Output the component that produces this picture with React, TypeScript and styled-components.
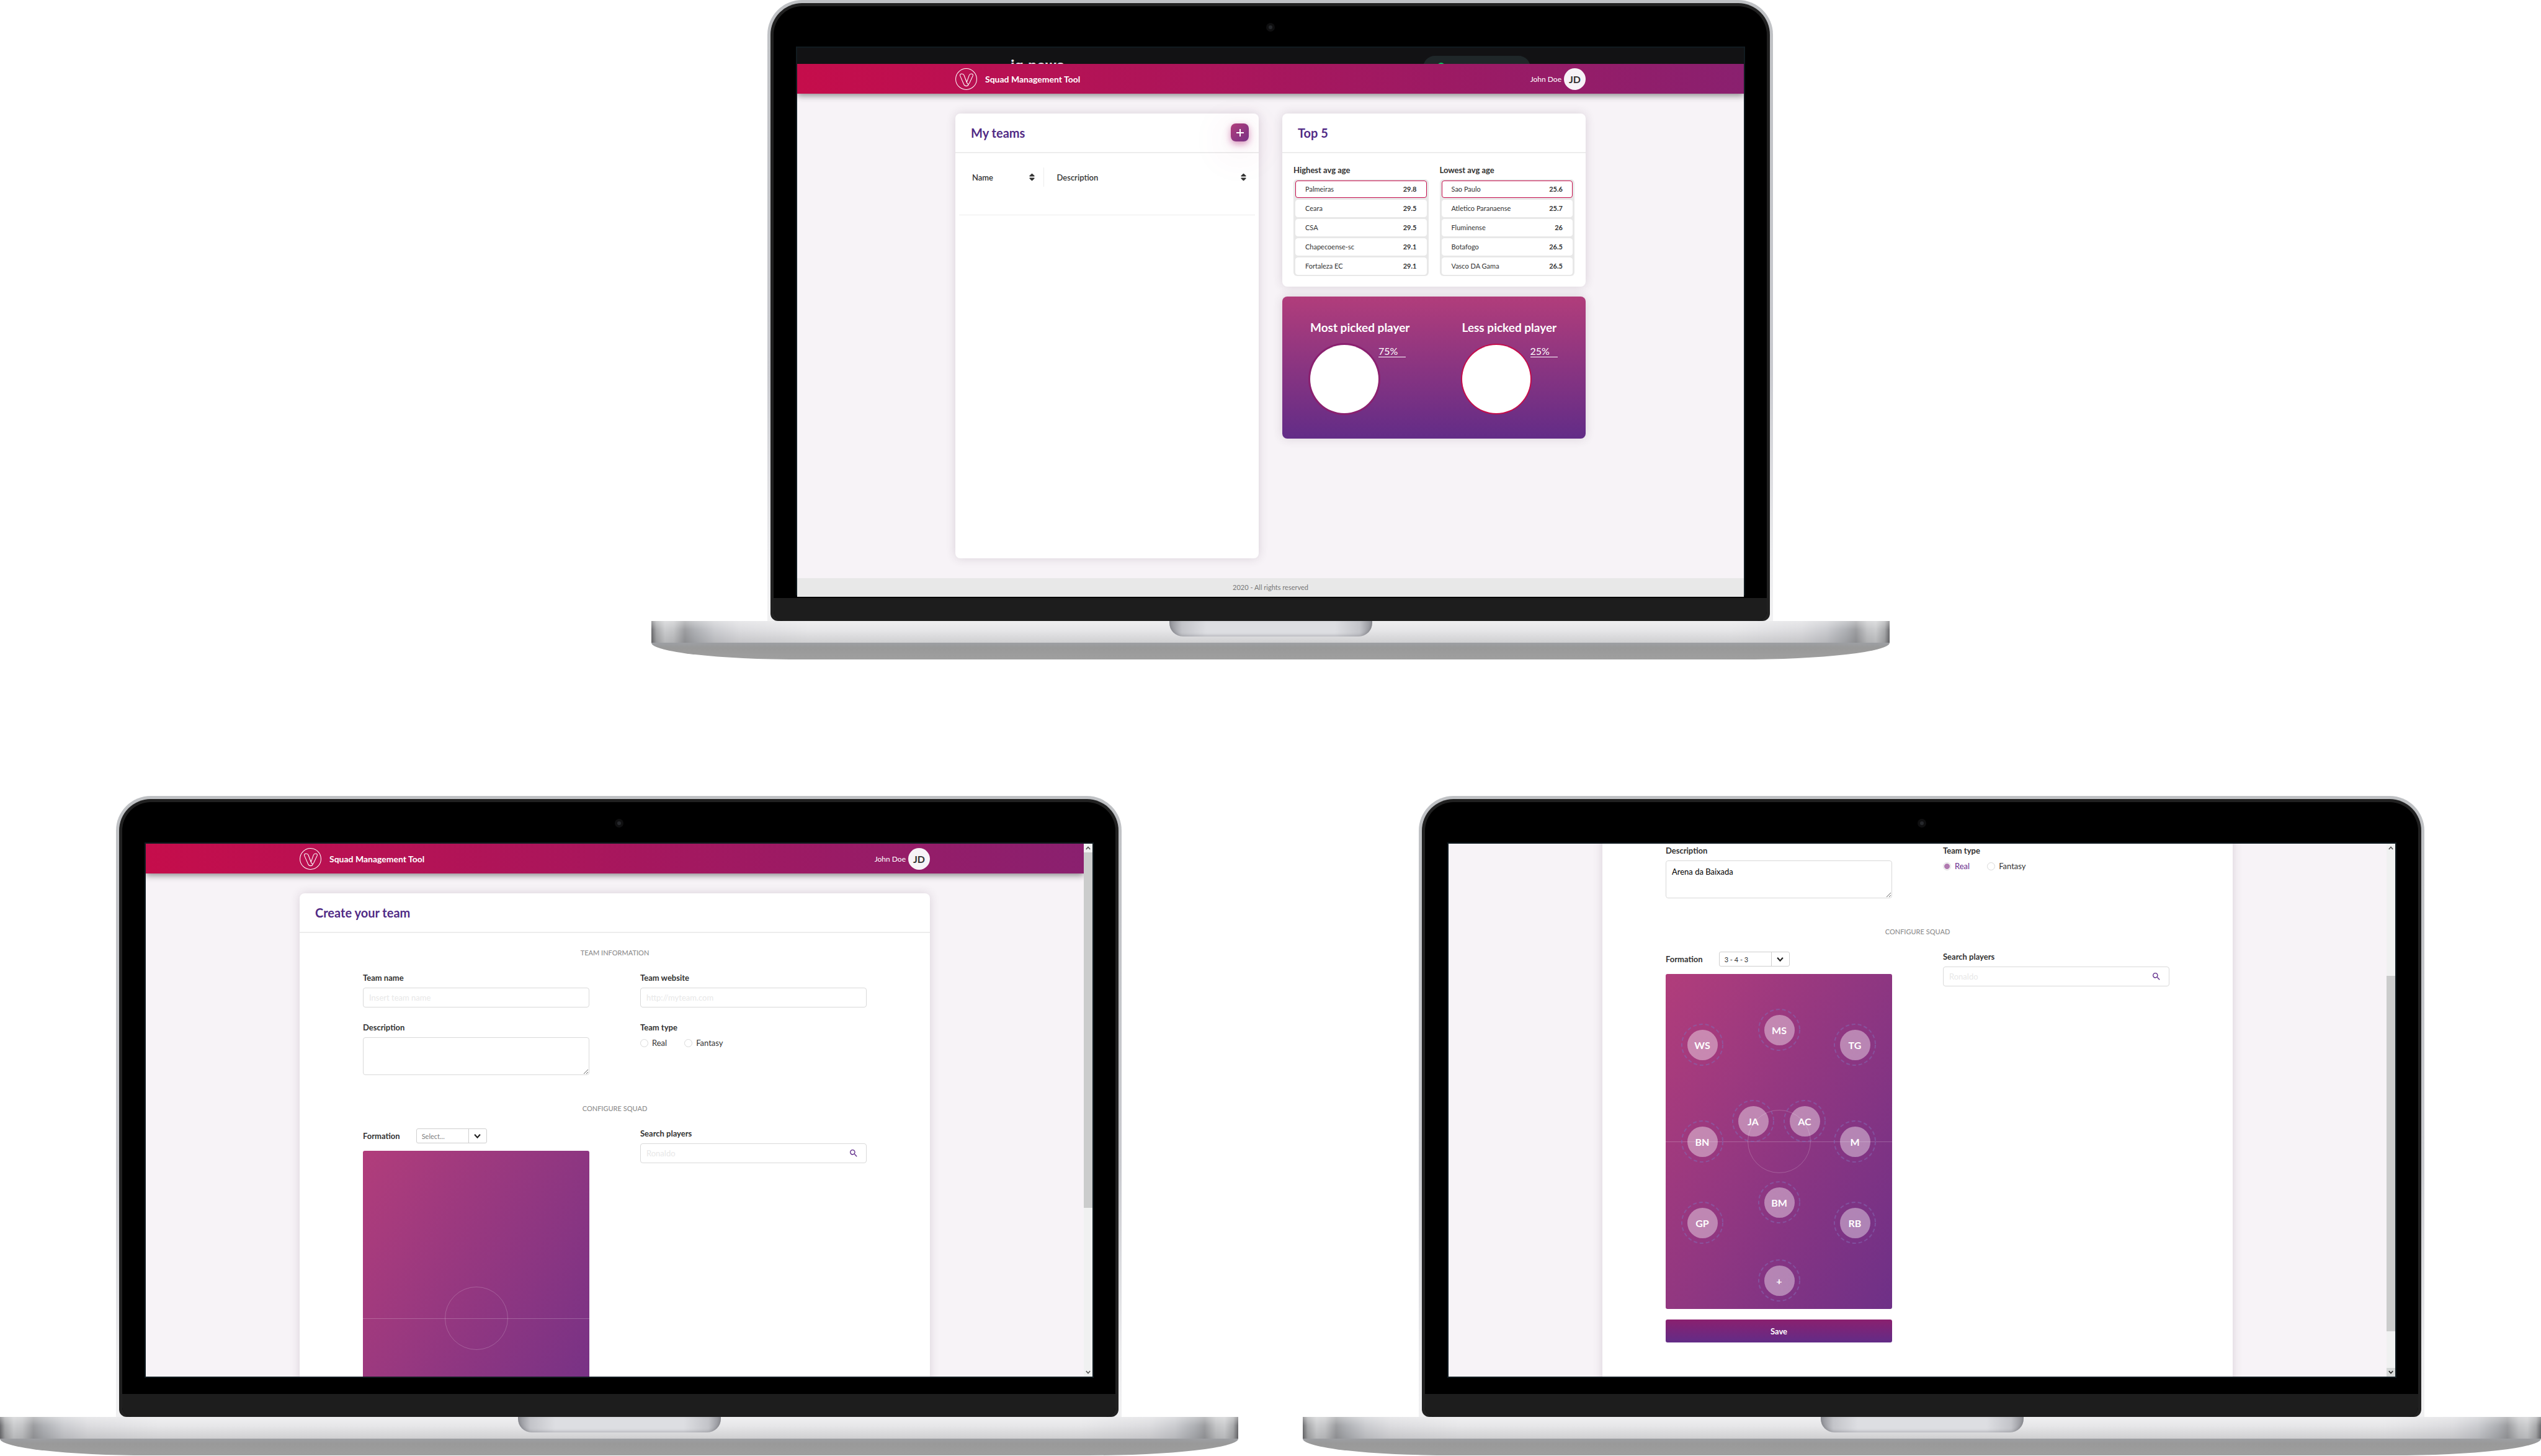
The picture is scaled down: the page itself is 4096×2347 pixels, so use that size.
import React, { useId, useLayoutEffect, useRef } from "react";
import styled, { createGlobalStyle, css } from "styled-components";
import { FaSort } from "react-icons/fa";
import { MdSearch } from "react-icons/md";

const GlobalStyle = createGlobalStyle`
  *, *::before, *::after { box-sizing: border-box; }
  body { margin: 0; background: #ffffff; }
  body, button, input, select, textarea { font-family: Lato, "Open Sans", sans-serif; }
`;

const color = {
  text: "#333333",
  title: "#512b86",
  line: "#ededed",
  field: "#d9d9d9",
  muted: "#8e8e8e",
  page: "#f7f3f7",
  red: "#c50d4b",
  wine: "#8a206f",
  pink: "#b13d7b",
  purple: "#622c87",
};

/* ---------- Showcase ---------- */

const Stage = styled.main`
  display: grid;
  grid-template-columns: 1fr 1fr;
  column-gap: 104px;
  row-gap: 220px;
  color: ${color.text};
`;

const LaptopFrame = styled.section<{ $lead?: boolean }>`
  min-width: 0;
  ${(p) =>
    p.$lead &&
    css`
      grid-column: 1 / -1;
      justify-self: center;
      width: calc((100% - 104px) / 2);
    `}
`;

const Lid = styled.div`
  margin: 0 188px 0 187px;
  padding: 5px 5px 0;
  border-radius: 56px 56px 0 0;
  background: linear-gradient(to bottom, #bfc1c4 0, #c9cacf 60%, #ececee 90%, #f1f1f2 100%);
`;

const Rim = styled.div`
  padding: 5px 5px 0;
  border-radius: 51px 51px 12px 12px;
  background: #212121;
`;

const Glass = styled.div`
  display: flex;
  flex-direction: column;
  height: 991px;
  border-radius: 46px 46px 16px 16px;
  overflow: hidden;
  background: #000000;
`;

const CameraBar = styled.div`
  display: flex;
  align-items: center;
  justify-content: center;
  height: 67px;
  flex: none;
`;

const Camera = styled.span`
  width: 14px;
  height: 14px;
  border: 4px solid #0f0f10;
  border-radius: 50%;
  background: #26282c;
`;

const Bezel = styled.div`
  flex: 1;
  padding: 0 37px 0 38px;
`;

const Chin = styled.div`
  flex: none;
  height: 37px;
  background: #1d1d1d;
`;

const Screen = styled.div<{ $overlaid?: boolean }>`
  box-shadow: ${(p) =>
    p.$overlaid ? "-2px -2px 0 #111b20, 2px -2px 0 #111b20" : "0 0 0 2px #111b20"};
`;

const BaseTop = styled.div`
  display: flex;
  justify-content: center;
  height: 35px;
  background:
    linear-gradient(to bottom, rgba(255, 255, 255, 0.35) 0, rgba(255, 255, 255, 0) 40%, rgba(0, 0, 0, 0.1) 100%),
    linear-gradient(
      to right,
      #6b6b6e 0,
      #a9aaac 8px,
      #cbccce 22px,
      #c4c5c7 36px,
      #9c9da0 54px,
      #aeb0b4 70px,
      #cbccd0 102px,
      #dcdcdf 142px,
      #e7e7e9 254px,
      #e7e7e9 calc(100% - 254px),
      #dcdcdf calc(100% - 142px),
      #cbccd0 calc(100% - 102px),
      #aeb0b4 calc(100% - 70px),
      #9c9da0 calc(100% - 54px),
      #c4c5c7 calc(100% - 36px),
      #cbccce calc(100% - 22px),
      #a9aaac calc(100% - 8px),
      #6b6b6e 100%
    );
`;

const Notch = styled.div`
  width: 327px;
  height: 25px;
  border-radius: 0 0 22px 22px;
  background: linear-gradient(to right, #8e8f95 0, #c3c4c9 20px, #dddee2 60px, #dddee2 calc(100% - 60px), #c3c4c9 calc(100% - 20px), #8e8f95 100%);
  box-shadow: inset 0 -2px 4px rgba(90, 90, 96, 0.3);
`;

const BaseUnder = styled.div`
  height: 27px;
  border-radius: 0 0 240px 240px / 0 0 27px 27px;
  background: linear-gradient(to bottom, #9d9fa3 0, #999999 30%, #9f9f9f 100%);
`;

function Laptop({ children, lead }: { children: React.ReactNode; lead?: boolean }) {
  return (
    <LaptopFrame $lead={lead}>
      <Lid>
        <Rim>
          <Glass>
            <CameraBar>
              <Camera />
            </CameraBar>
            <Bezel>
              <Screen $overlaid={lead}>{children}</Screen>
            </Bezel>
            <Chin />
          </Glass>
        </Rim>
      </Lid>
      <BaseTop>
        <Notch />
      </BaseTop>
      <BaseUnder />
    </LaptopFrame>
  );
}

/* ---------- Page behind the dashboard ---------- */

const BackPage = styled.div`
  display: flex;
  justify-content: space-between;
  align-items: flex-start;
  height: 26px;
  padding: 13px 344px 0;
  overflow: hidden;
  background: #121214;
`;

const BackBrand = styled.span`
  font: 700 25px/33px Roboto, sans-serif;
  color: #e1e1e6;
`;

const BackPill = styled.span`
  display: block;
  width: 173px;
  height: 38px;
  padding: 11px 23px;
  border-radius: 19px;
  background: #1f2729;
`;

const BackDot = styled.span`
  display: block;
  width: 12px;
  height: 12px;
  border-radius: 50%;
  background: #04d361;
`;

/* ---------- App chrome ---------- */

const Viewport = styled.div`
  display: flex;
  aspect-ratio: 1525 / 858;
  overflow: hidden;
  background: ${color.page};
`;

const ScrollArea = styled.div`
  flex: 1;
  min-width: 0;
  display: flex;
  flex-direction: column;
  overflow-y: auto;
  scrollbar-width: none;
`;

const Bar = styled.header`
  position: relative;
  z-index: 1;
  flex: none;
  height: 48px;
  background: linear-gradient(to right, ${color.red}, ${color.wine});
  box-shadow: 0 3px 10px rgba(0, 0, 0, 0.45);
`;

const Container = styled.div`
  width: 100%;
  max-width: 1016px;
  margin: 0 auto;
`;

const BarContent = styled(Container)`
  display: flex;
  align-items: center;
  justify-content: space-between;
  height: 100%;
`;

const Brand = styled.a`
  display: flex;
  align-items: center;
  gap: 13px;
  font-size: 14px;
  font-weight: 700;
  color: #ffffff;
  text-decoration: none;
`;

const User = styled.div`
  display: flex;
  align-items: center;
  gap: 4px;
  font-size: 12px;
  color: #ffffff;
`;

const Avatar = styled.span`
  display: flex;
  align-items: center;
  justify-content: center;
  width: 35px;
  height: 35px;
  border-radius: 50%;
  background: ${color.page};
  font-size: 16px;
  font-weight: 700;
  color: ${color.text};
`;

const Footer = styled.footer`
  flex: none;
  height: 30px;
  line-height: 30px;
  background: #e8e8e8;
  font-size: 11px;
  text-align: center;
  color: #777777;
`;

function Logo() {
  return (
    <svg width="35" height="35" viewBox="0 0 44 44" fill="none" stroke="#ffffff" strokeWidth="1.3" aria-hidden="true">
      <circle cx="22" cy="22" r="21.3" />
      <path
        strokeLinecap="round"
        strokeLinejoin="round"
        d="M26.8 32.5C26.2 35 24.6 36 22.4 36C19.6 36 18.2 35 17.2 32.6L9.6 15.2C8.9 12.6 10.4 11.4 13 11.4C15.6 11.4 16.8 12 17.6 14.2L23 28.6L28 14.2C28.8 12 30.2 11.4 32.2 11.4C35.2 11.4 36.2 12.9 35.4 15.4L28.4 30.6C27.4 32.4 25.2 32.2 24.2 31L20.6 21.6"
      />
    </svg>
  );
}

function AppBar() {
  return (
    <Bar>
      <BarContent>
        <Brand href="#home">
          <Logo />
          Squad Management Tool
        </Brand>
        <User>
          John Doe <Avatar>JD</Avatar>
        </User>
      </BarContent>
    </Bar>
  );
}

const Card = styled.section`
  border-radius: 8px;
  background: #ffffff;
  box-shadow: 0 0 16px rgba(60, 40, 60, 0.16);
`;

const CardHead = styled.header`
  display: flex;
  align-items: center;
  justify-content: space-between;
  height: 64px;
  padding: 0 16px 1px 25px;
  border-bottom: 2px solid ${color.line};
`;

const CardTitle = styled.h2`
  margin: 0;
  font-size: 20px;
  line-height: 24px;
  font-weight: 700;
  color: ${color.title};
`;

/* ---------- Dashboard ---------- */

const DashGrid = styled(Container)`
  flex: 1;
  display: grid;
  grid-template-columns: 1fr 1fr;
  gap: 38px;
  padding: 32px 0;
`;

const Side = styled.div`
  display: flex;
  flex-direction: column;
  gap: 16px;
`;

const AddButton = styled.button`
  display: flex;
  align-items: center;
  justify-content: center;
  width: 29px;
  height: 29px;
  padding: 0;
  border: 0;
  border-radius: 8px;
  background: linear-gradient(135deg, ${color.pink}, #783286);
  box-shadow: 0 4px 12px rgba(177, 40, 120, 0.5), 0 12px 60px 12px rgba(177, 61, 123, 0.08);
`;

const TeamTable = styled.table`
  width: calc(100% - 12px);
  margin: 23px 6px 0;
  border-collapse: collapse;
  table-layout: fixed;
`;

const HeadCell = styled.th<{ $narrow?: boolean }>`
  width: ${(p) => (p.$narrow ? "136px" : "auto")};
  height: 31px;
  padding: 0 11px 0 21px;
  border-right: ${(p) => (p.$narrow ? `1px solid ${color.line}` : "0")};
`;

const SortButton = styled.button`
  display: flex;
  align-items: center;
  justify-content: space-between;
  width: 100%;
  padding: 0;
  border: 0;
  background: none;
  font-size: 13px;
  font-weight: 600;
  color: ${color.text};
  & > svg {
    width: 15px;
    height: 15px;
  }
`;

const EmptyCell = styled.td`
  height: 45px;
  padding: 0;
  border-bottom: 1px solid ${color.line};
`;

const Rankings = styled.div`
  display: grid;
  grid-template-columns: 1fr 1fr;
  gap: 18px;
  padding: 19px 18px 17px;
`;

const RankTitle = styled.h3`
  margin: 0 0 7px;
  font-size: 13px;
  line-height: 16px;
  font-weight: 700;
`;

const RankList = styled.ol`
  display: flex;
  flex-direction: column;
  gap: 3px;
  margin: 0;
  padding: 2px 3px;
  border-radius: 6px;
  background: #e8e8e8;
  list-style: none;
`;

const RankItem = styled.li<{ $first: boolean }>`
  display: flex;
  align-items: center;
  justify-content: space-between;
  height: 28px;
  padding: 0 15px 1px;
  border: 1px solid ${(p) => (p.$first ? color.red : "#ffffff")};
  border-radius: 4px;
  background: #ffffff;
  font-size: 11px;
`;

const Picks = styled.section`
  display: grid;
  grid-template-columns: 1fr 1fr;
  padding: 38px 0 41px;
  border-radius: 8px;
  background: linear-gradient(to bottom, ${color.pink}, ${color.purple});
  box-shadow: 0 0 16px rgba(60, 40, 60, 0.16);
  color: #ffffff;
`;

const Pick = styled.div`
  padding-left: 45px;
`;

const PickTitle = styled.h2`
  margin: 0 0 16px;
  font-size: 19px;
  line-height: 24px;
  font-weight: 700;
`;

const PickRow = styled.div`
  display: flex;
  align-items: flex-start;
`;

const PickFace = styled.span<{ $ring: string; $thick: number }>`
  width: 110px;
  height: 110px;
  border-radius: 50%;
  background: #ffffff;
  box-shadow: 0 0 0 ${(p) => p.$thick}px ${(p) => p.$ring};
`;

const PickShare = styled.span`
  width: 44px;
  height: 20px;
  border-bottom: 1px solid #ffffff;
  font-size: 16px;
  line-height: 20px;
`;

const highest = [
  ["Palmeiras", "29.8"],
  ["Ceara", "29.5"],
  ["CSA", "29.5"],
  ["Chapecoense-sc", "29.1"],
  ["Fortaleza EC", "29.1"],
];

const lowest = [
  ["Sao Paulo", "25.6"],
  ["Atletico Paranaense", "25.7"],
  ["Fluminense", "26"],
  ["Botafogo", "26.5"],
  ["Vasco DA Gama", "26.5"],
];

function Ranking({ title, rows }: { title: string; rows: string[][] }) {
  return (
    <div>
      <RankTitle>{title}</RankTitle>
      <RankList>
        {rows.map(([name, value], i) => (
          <RankItem key={name} $first={i === 0}>
            <span>{name}</span>
            <b>{value}</b>
          </RankItem>
        ))}
      </RankList>
    </div>
  );
}

function Dashboard() {
  return (
    <>
      <BackPage>
        <BackBrand>ig.news</BackBrand>
        <BackPill>
          <BackDot />
        </BackPill>
      </BackPage>
      <Viewport>
        <ScrollArea>
          <AppBar />
          <DashGrid>
            <Card>
              <CardHead>
                <CardTitle>My teams</CardTitle>
                <AddButton type="button" aria-label="Add team">
                  <svg width="12" height="12" viewBox="0 0 12 12" stroke="#ffffff" strokeWidth="2" aria-hidden="true">
                    <path d="M6 0V12M0 6H12" />
                  </svg>
                </AddButton>
              </CardHead>
              <TeamTable>
                <thead>
                  <tr>
                    <HeadCell scope="col" $narrow>
                      <SortButton type="button">
                        Name <FaSort aria-hidden="true" />
                      </SortButton>
                    </HeadCell>
                    <HeadCell scope="col">
                      <SortButton type="button">
                        Description <FaSort aria-hidden="true" />
                      </SortButton>
                    </HeadCell>
                  </tr>
                </thead>
                <tbody>
                  <tr>
                    <EmptyCell colSpan={2} />
                  </tr>
                </tbody>
              </TeamTable>
            </Card>
            <Side>
              <Card>
                <CardHead>
                  <CardTitle>Top 5</CardTitle>
                </CardHead>
                <Rankings>
                  <Ranking title="Highest avg age" rows={highest} />
                  <Ranking title="Lowest avg age" rows={lowest} />
                </Rankings>
              </Card>
              <Picks>
                <Pick>
                  <PickTitle>Most picked player</PickTitle>
                  <PickRow>
                    <PickFace $ring={color.wine} $thick={3} />
                    <PickShare>75%</PickShare>
                  </PickRow>
                </Pick>
                <Pick>
                  <PickTitle>Less picked player</PickTitle>
                  <PickRow>
                    <PickFace $ring={color.red} $thick={2} />
                    <PickShare>25%</PickShare>
                  </PickRow>
                </Pick>
              </Picks>
            </Side>
          </DashGrid>
          <Footer>2020 - All rights reserved</Footer>
        </ScrollArea>
      </Viewport>
    </>
  );
}

/* ---------- Team form ---------- */

const FormMain = styled(Container)`
  padding: 32px 0;
`;

const FormBody = styled.form`
  padding: 24px 102px 96px;
`;

const SectionTitle = styled.h3`
  margin: 0;
  font-size: 11px;
  line-height: 16px;
  font-weight: 500;
  text-align: center;
  text-transform: uppercase;
  color: ${color.muted};
`;

const Fields = styled.div<{ $last?: boolean }>`
  display: grid;
  grid-template-columns: 1fr 1fr;
  column-gap: 82px;
  row-gap: 24px;
  align-items: start;
  margin: 24px 0 ${(p) => (p.$last ? 0 : 46)}px;
`;

const Field = styled.div`
  display: flex;
  flex-direction: column;
  gap: 8px;
`;

const RadioField = styled.fieldset`
  margin: 0;
  padding: 0;
  border: 0;
`;

const labelText = css`
  font-size: 13px;
  line-height: 16px;
  font-weight: 700;
  color: ${color.text};
`;

const Label = styled.label`
  ${labelText}
`;

const Legend = styled.legend`
  ${labelText}
  padding: 0;
  margin-bottom: 8px;
`;

const box = css`
  width: 100%;
  border: 1px solid ${color.field};
  border-radius: 4px;
  background: #ffffff;
  font-size: 13px;
  color: #000000;
  outline: 0;
`;

const TextInput = styled.input`
  ${box}
  height: 32px;
  padding: 0 9px;
  &::placeholder {
    color: #e8e8e8;
    opacity: 1;
  }
`;

const TextBox = styled.textarea`
  ${box}
  display: block;
  height: 61px;
  padding: 9px;
  line-height: 16px;
`;

const RadioRow = styled.div`
  display: flex;
  gap: 28px;
`;

const RadioLabel = styled.label`
  display: flex;
  align-items: center;
  gap: 6px;
  font-size: 13px;
  line-height: 18px;
  &:has(input:checked) {
    color: #6a2d8c;
  }
`;

const Radio = styled.input`
  appearance: none;
  width: 13px;
  height: 13px;
  margin: 0;
  border: 1px solid ${color.field};
  border-radius: 50%;
  background: #ffffff;
  &:checked {
    background: radial-gradient(circle, #b07ab0 4px, #ffffff 5px);
  }
`;

const FormationRow = styled.div`
  display: flex;
  align-items: center;
  gap: 26px;
  height: 24px;
`;

const SelectBox = styled.div`
  display: grid;
  width: 114px;
  height: 24px;
  border: 1px solid #cfcfcf;
  border-radius: 3px;
`;

const Select = styled.select<{ $empty: boolean }>`
  grid-area: 1 / 1;
  appearance: none;
  padding: 0 0 0 8px;
  border: 0;
  background: none;
  font-size: 11px;
  color: ${(p) => (p.$empty ? "#808080" : color.text)};
`;

const SelectMark = styled.span`
  grid-area: 1 / 1;
  justify-self: end;
  display: flex;
  align-items: center;
  justify-content: center;
  width: 29px;
  border-left: 1px solid #cfcfcf;
  pointer-events: none;
`;

const SearchBox = styled.div`
  display: grid;
  align-items: center;
  & > * {
    grid-area: 1 / 1;
  }
`;

const SearchButton = styled.button`
  justify-self: end;
  display: flex;
  margin-right: 13px;
  padding: 0;
  border: 0;
  background: none;
  font-size: 16px;
  color: #5f2b8a;
`;

const Pitch = styled.div`
  position: relative;
  height: 540px;
  margin-top: 4px;
  border-radius: 3px;
  background: linear-gradient(120deg, ${color.pink}, #6e3087);
  overflow: hidden;
`;

const Halfway = styled.span`
  position: absolute;
  top: 50%;
  left: 0;
  right: 0;
  height: 1px;
  background: rgba(255, 255, 255, 0.22);
`;

const CenterCircle = styled.span`
  position: absolute;
  top: 50%;
  left: 50%;
  width: 102px;
  height: 102px;
  margin: -51px;
  border: 1px solid rgba(255, 255, 255, 0.2);
  border-radius: 50%;
`;

const PlayerSpot = styled.button`
  position: absolute;
  display: grid;
  place-items: center;
  width: 68px;
  height: 68px;
  margin: -34px;
  padding: 0;
  border: 0;
  background: none;
  font-size: 16px;
  font-weight: 700;
  color: #ffffff;
  & > * {
    grid-area: 1 / 1;
  }
`;

const PlayerDisc = styled.span`
  display: flex;
  align-items: center;
  justify-content: center;
  width: 49px;
  height: 49px;
  border-radius: 50%;
  background: rgba(255, 255, 255, 0.4);
`;

const SaveButton = styled.button`
  height: 37px;
  margin-top: 9px;
  padding: 0;
  border: 0;
  border-radius: 3px;
  background: linear-gradient(to bottom, ${color.wine}, ${color.purple});
  font-size: 13px;
  font-weight: 700;
  color: #ffffff;
`;

const ScrollRail = styled.div`
  flex: none;
  display: flex;
  flex-direction: column;
  width: 14px;
  background: #f0f1f1;
`;

const ScrollArrow = styled.button<{ $pressed?: boolean }>`
  display: flex;
  align-items: center;
  justify-content: center;
  height: 14px;
  padding: 0;
  border: 0;
  background: ${(p) => (p.$pressed ? "#d6d9d8" : "transparent")};
`;

const ScrollTrack = styled.div<{ $before: number }>`
  flex: 1;
  display: grid;
  grid-template-rows: ${(p) => p.$before}fr 69fr ${(p) => 31 - p.$before}fr;
`;

const ScrollThumb = styled.div`
  grid-row: 2;
  background: #cbcccc;
`;

type Spot = { name: string; x: number; y: number };

const lineup: Spot[] = [
  { name: "MS", x: 183, y: 90 },
  { name: "WS", x: 59, y: 114 },
  { name: "TG", x: 305, y: 114 },
  { name: "JA", x: 141, y: 237 },
  { name: "AC", x: 224, y: 237 },
  { name: "BN", x: 59, y: 270 },
  { name: "M", x: 305, y: 270 },
  { name: "BM", x: 183, y: 368 },
  { name: "GP", x: 59, y: 401 },
  { name: "RB", x: 305, y: 401 },
  { name: "+", x: 183, y: 494 },
];

function Chevron({ up, size = 8, bold }: { up?: boolean; size?: number; bold?: boolean }) {
  return (
    <svg width={size} height={size} viewBox="0 0 10 10" fill="none" stroke={bold ? "#222222" : "#555555"} strokeWidth="2" aria-hidden="true">
      <path d={up ? "M1 7.5L5 3L9 7.5" : "M1 2.5L5 7L9 2.5"} />
    </svg>
  );
}

function TeamForm({
  description = "",
  type,
  formation = "",
  players = [],
  scroll = 0,
  rail = 0,
}: {
  description?: string;
  type?: string;
  formation?: string;
  players?: Spot[];
  scroll?: number;
  rail?: number;
}) {
  const id = useId();
  const area = useRef<HTMLDivElement>(null);

  useLayoutEffect(() => {
    if (area.current) area.current.scrollTop = scroll;
  }, [scroll]);

  return (
    <Viewport>
      <ScrollArea ref={area}>
        <AppBar />
        <FormMain>
          <Card>
            <CardHead>
              <CardTitle>Create your team</CardTitle>
            </CardHead>
            <FormBody onSubmit={(e) => e.preventDefault()}>
              <SectionTitle>Team information</SectionTitle>
              <Fields>
                <Field>
                  <Label htmlFor={`${id}-name`}>Team name</Label>
                  <TextInput id={`${id}-name`} placeholder="Insert team name" />
                </Field>
                <Field>
                  <Label htmlFor={`${id}-site`}>Team website</Label>
                  <TextInput id={`${id}-site`} placeholder="http://myteam.com" />
                </Field>
                <Field>
                  <Label htmlFor={`${id}-description`}>Description</Label>
                  <TextBox id={`${id}-description`} defaultValue={description} />
                </Field>
                <RadioField>
                  <Legend>Team type</Legend>
                  <RadioRow>
                    {["Real", "Fantasy"].map((option) => (
                      <RadioLabel key={option}>
                        <Radio type="radio" name={`${id}-type`} value={option} defaultChecked={option === type} />
                        {option}
                      </RadioLabel>
                    ))}
                  </RadioRow>
                </RadioField>
              </Fields>
              <SectionTitle>Configure squad</SectionTitle>
              <Fields $last>
                <Field>
                  <FormationRow>
                    <Label htmlFor={`${id}-formation`}>Formation</Label>
                    <SelectBox>
                      <Select id={`${id}-formation`} defaultValue={formation} $empty={!formation}>
                        <option value="" disabled>
                          Select...
                        </option>
                        <option value="3-4-3">3 - 4 - 3</option>
                      </Select>
                      <SelectMark>
                        <Chevron bold size={11} />
                      </SelectMark>
                    </SelectBox>
                  </FormationRow>
                  <Pitch>
                    <Halfway />
                    <CenterCircle />
                    {players.map((p) => (
                      <PlayerSpot key={p.name} type="button" style={{ left: p.x, top: p.y }}>
                        <svg width="68" height="68" fill="none" stroke="rgba(132, 104, 178, 0.55)" strokeWidth="2" strokeDasharray="6 4" aria-hidden="true">
                          <circle cx="34" cy="34" r="33" />
                        </svg>
                        <PlayerDisc>{p.name}</PlayerDisc>
                      </PlayerSpot>
                    ))}
                  </Pitch>
                  <SaveButton type="submit">Save</SaveButton>
                </Field>
                <Field>
                  <Label htmlFor={`${id}-search`}>Search players</Label>
                  <SearchBox>
                    <TextInput id={`${id}-search`} placeholder="Ronaldo" />
                    <SearchButton type="button" aria-label="Search">
                      <MdSearch />
                    </SearchButton>
                  </SearchBox>
                </Field>
              </Fields>
            </FormBody>
          </Card>
        </FormMain>
        <Footer>2020 - All rights reserved</Footer>
      </ScrollArea>
      <ScrollRail>
        <ScrollArrow type="button" aria-label="Scroll up">
          <Chevron up />
        </ScrollArrow>
        <ScrollTrack $before={rail}>
          <ScrollThumb />
        </ScrollTrack>
        <ScrollArrow type="button" aria-label="Scroll down" $pressed={rail > 0}>
          <Chevron bold={rail > 0} />
        </ScrollArrow>
      </ScrollRail>
    </Viewport>
  );
}

export default function App() {
  return (
    <>
      <GlobalStyle />
      <Stage>
        <Laptop lead>
          <Dashboard />
        </Laptop>
        <Laptop>
          <TeamForm />
        </Laptop>
        <Laptop>
          <TeamForm description="Arena da Baixada" type="Real" formation="3-4-3" players={lineup} scroll={285} rail={24} />
        </Laptop>
      </Stage>
    </>
  );
}
